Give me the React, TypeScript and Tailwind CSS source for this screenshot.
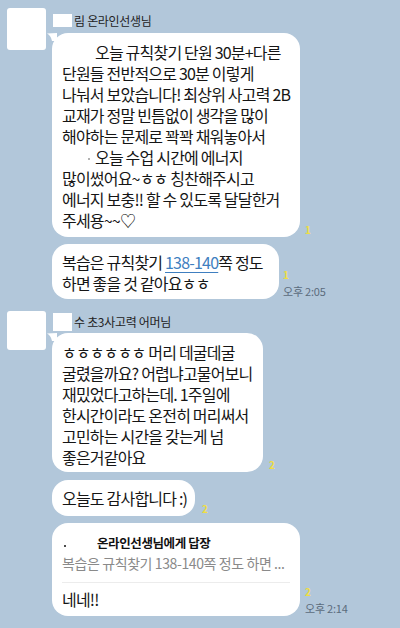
import React from 'react';

const font = { fontFamily: '"Noto Sans CJK KR", "Noto Sans", sans-serif' };

const Tail = () => (
  <svg className="absolute -left-[5px] top-0" width="10" height="8" viewBox="0 0 10 8">
    <path d="M10 0 L0 0.5 Q4 2.5 5 8 L10 8 Z" fill="#ffffff" />
  </svg>
);

const Meta = ({ count, time }: { count: string; time?: string }) => (
  <div className="flex flex-col items-start pb-[1px] shrink-0">
    <span className="text-[10px] leading-[12px] font-bold text-[#eedd44]">{count}</span>
    {time && <span className="mt-[3px] text-[11px] leading-[14px] text-[#5b6b7c] tracking-[-0.2px]">{time}</span>}
  </div>
);

const Bubble = ({
  children,
  width,
  tail,
  className = '',
}: {
  children: React.ReactNode;
  width: string;
  tail?: boolean;
  className?: string;
}) => (
  <div
    className={`relative bg-white rounded-[16px] pl-[10px] pr-[6px] text-[16px] leading-[21px] tracking-[-0.8px] text-[#151515] whitespace-nowrap ${width} ${className}`}
  >
    {tail && <Tail />}
    {children}
  </div>
);

export default function App() {
  return (
    <div style={font} className="w-[400px] h-[628px] bg-[#b2c7da] overflow-hidden flex flex-col">
      {/* first sender */}
      <div className="flex mt-[8px]">
        <div className="ml-[7px] w-[39px] h-[42px] bg-white rounded-[3px] shrink-0" />
        <div className="ml-[6px] flex flex-col">
          <div className="flex items-center h-[25px] pl-[1px] text-[12px] text-[#222] tracking-[-0.3px]">
            <span className="w-[19px] h-[13px] bg-white mr-[2px]" />
            <span>림 온라인선생님</span>
          </div>
          <div className="flex items-end gap-[5px]">
            <Bubble width="w-[248px]" tail className="pt-[9px] pb-[6px]">
              <div className="pl-[33px]">오늘 규칙찾기 단원 30분+다른</div>
              <div>단원들 전반적으로 30분 이렇게</div>
              <div>나눠서 보았습니다! 최상위 사고력 2B</div>
              <div>교재가 정말 빈틈없이 생각을 많이</div>
              <div>해야하는 문제로 꽉꽉 채워놓아서</div>
              <div className="relative pl-[33px]">
                <span className="absolute left-[26px] top-[11px] w-[2px] h-[2px] bg-[#999] rounded-full" />
                오늘 수업 시간에 에너지
              </div>
              <div>많이썼어요~ㅎㅎ 칭찬해주시고</div>
              <div>에너지 보충!! 할 수 있도록 달달한거</div>
              <div>주세용~~♡</div>
            </Bubble>
            <Meta count="1" />
          </div>
          <div className="flex items-end gap-[4px] mt-[7px]">
            <Bubble width="w-[227px]" className="pt-[8px] pb-[5px]">
              <div>
                복습은 규칙찾기 <span className="text-[#3f7fc0] underline underline-offset-[3px]">138-140</span>쪽 정도
              </div>
              <div>하면 좋을 것 같아요ㅎㅎ</div>
            </Bubble>
            <Meta count="1" time="오후 2:05" />
          </div>
        </div>
      </div>

      {/* second sender */}
      <div className="flex mt-[12px]">
        <div className="ml-[7px] w-[39px] h-[39px] bg-white rounded-[3px] shrink-0" />
        <div className="ml-[6px] flex flex-col">
          <div className="flex items-center h-[22px] pl-[1px] text-[12px] text-[#222] tracking-[-0.3px]">
            <span className="w-[19px] h-[18px] bg-white mr-[2px]" />
            <span>수 초3사고력 어머님</span>
          </div>
          <div className="flex items-end gap-[6px]">
            <Bubble width="w-[211px]" tail className="pt-[9px] pb-[4px]">
              <div>ㅎㅎㅎㅎㅎㅎ 머리 데굴데굴</div>
              <div>굴렸을까요? 어렵냐고물어보니</div>
              <div>재밌었다고하는데. 1주일에</div>
              <div>한시간이라도 온전히 머리써서</div>
              <div>고민하는 시간을 갖는게 넘</div>
              <div>좋은거같아요</div>
            </Bubble>
            <Meta count="2" />
          </div>
          <div className="flex items-end gap-[7px] mt-[8px]">
            <Bubble width="w-[143px]" className="pt-[8px] pb-[7px]">
              <div>오늘도 감사합니다 :)</div>
            </Bubble>
            <Meta count="2" />
          </div>
          <div className="flex items-end gap-[5px] mt-[7px]">
            <Bubble width="w-[248px]" className="pt-[11px] pb-[6px]">
              <div className="flex items-center text-[12.5px] leading-[18px] font-bold tracking-[-0.4px] text-[#111]">
                <span className="w-[2px] h-[2px] bg-[#111] rounded-full ml-[2px] mr-[31px] mt-[5px]" />
                온라인선생님에게 답장
              </div>
              <div className="text-[14px] leading-[20px] text-[#8a8a8a] tracking-[-0.4px] mt-[1px]">
                복습은 규칙찾기 138-140쪽 정도 하면 ...
              </div>
              <div className="h-px bg-[#ececec] mr-[4px] mt-[9px]" />
              <div className="mt-[6px]">네네!!</div>
            </Bubble>
            <Meta count="2" time="오후 2:14" />
          </div>
        </div>
      </div>
    </div>
  );
}
